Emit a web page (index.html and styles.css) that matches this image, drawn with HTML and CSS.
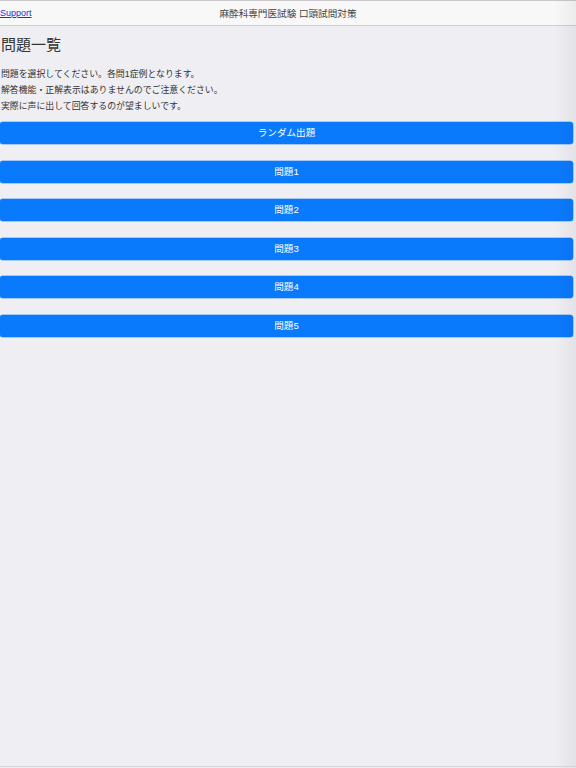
FILE: index.html
```html
<!DOCTYPE html>
<html lang="ja">
<head>
<meta charset="utf-8">
<title>問題一覧</title>
<link rel="stylesheet" href="styles.css">
</head>
<body>
<header class="topbar">
  <a class="support" href="#">Support</a>
  <div class="title">麻酔科専門医試験 口頭試問対策</div>
</header>
<main class="content">
  <h1 class="heading">問題一覧</h1>
  <div class="intro">
    <p>問題を選択してください。各問1症例となります。</p>
    <p>解答機能・正解表示はありませんのでご注意ください。</p>
    <p>実際に声に出して回答するのが望ましいです。</p>
  </div>
  <div class="buttons">
    <a class="btn" href="#">ランダム出題</a>
    <a class="btn" href="#">問題1</a>
    <a class="btn" href="#">問題2</a>
    <a class="btn" href="#">問題3</a>
    <a class="btn" href="#">問題4</a>
    <a class="btn" href="#">問題5</a>
  </div>
</main>
<div class="edge-shade"></div>
</body>
</html>
```
FILE: styles.css
```css
html, body {
  margin: 0;
  padding: 0;
}
body {
  width: 576px;
  height: 768px;
  overflow: hidden;
  background: #efeef3;
  font-family: "Liberation Sans", "Noto Sans CJK JP", sans-serif;
  color: #333333;
  position: relative;
}
.topbar {
  height: 24px;
  border-top: 1px solid #c9c9cc;
  border-bottom: 1px solid #cfcfd2;
  background: #f8f8f9;
  display: flex;
  align-items: center;
  position: relative;
}
.support {
  font-size: 9px;
  color: #2a2ad0;
  text-decoration: underline;
}
.title {
  position: absolute;
  left: 0;
  right: 0;
  text-align: center;
  font-size: 9.6px;
  color: #444444;
  pointer-events: none;
}
.content {
  padding: 0 3px 0 0;
}
.heading {
  margin: 9px 0 0 1px;
  font-size: 15px;
  line-height: 20px;
  font-weight: normal;
  color: #333333;
}
.intro {
  margin-top: 11px;
}
.intro p {
  margin: 0;
  padding-left: 1px;
  font-size: 8.9px;
  line-height: 16px;
  color: #333333;
}
.buttons {
  margin-top: 8px;
  display: flex;
  flex-direction: column;
  gap: 16.6px;
}
.btn {
  display: block;
  height: 22px;
  line-height: 22px;
  border-radius: 3px;
  background: #0a7afc;
  color: #ffffff;
  text-align: center;
  text-decoration: none;
  font-size: 9.6px;
  box-shadow: 0 0 0 0.5px #5aa4ff;
}
.edge-shade {
  position: absolute;
  top: 0;
  right: 0;
  width: 22px;
  height: 768px;
  background: linear-gradient(to right, rgba(0,0,0,0), rgba(0,0,20,0.05));
  pointer-events: none;
}
body::after {
  content: "";
  position: absolute;
  left: 0;
  right: 0;
  bottom: 1px;
  height: 1px;
  background: #d6d6da;
}
```
